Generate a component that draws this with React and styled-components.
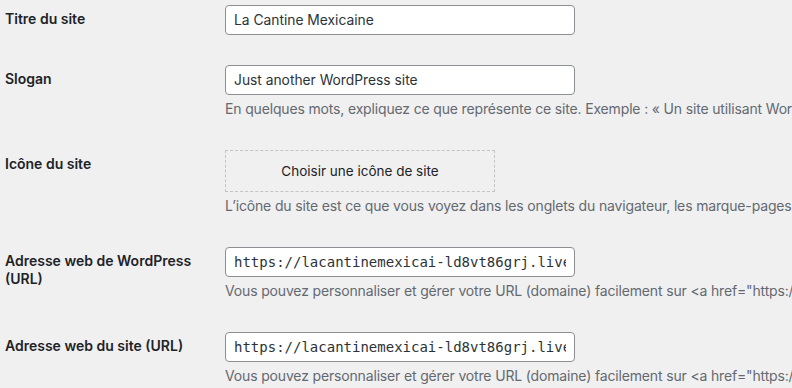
import React from "react";
import styled, { createGlobalStyle } from "styled-components";

const GlobalStyle = createGlobalStyle`
  html, body {
    margin: 0;
    padding: 0;
    background: #f0f0f1;
    overflow: hidden;
  }
  body {
    font-family: Inter, "Liberation Sans", sans-serif;
    color: #1d2327;
  }
`;

const Page = styled.div`
  margin-top: -10px;
  padding-left: 5px;
  width: 1400px;
`;

const Row = styled.div`
  display: grid;
  grid-template-columns: 210px 1fr;
`;

const Label = styled.label`
  padding: 20px 10px 20px 0;
  font-size: 14px;
  font-weight: 600;
  line-height: 1.3;
  color: #1d2327;
`;

const Field = styled.div`
  padding: 15px 10px;
`;

const TextInput = styled.input`
  box-sizing: border-box;
  display: block;
  width: 350px;
  height: 30px;
  margin: 0;
  padding: 0 8px;
  border: 1px solid #8c8f94;
  border-radius: 4px;
  background: #fff;
  color: #2c3338;
  font-family: ${(p) =>
    p.$code ? '"DejaVu Sans Mono", monospace' : 'Inter, "Liberation Sans", sans-serif'};
  font-size: ${(p) => (p.$code ? "14px" : "13.8px")};
  outline: none;
`;

const Description = styled.p`
  margin: 4px 0 1px;
  font-size: 14px;
  letter-spacing: -0.16px;
  line-height: 20px;
  color: #646970;
  white-space: nowrap;
`;

const IconButton = styled.button`
  box-sizing: border-box;
  display: block;
  width: 270px;
  height: 42px;
  margin: 0;
  border: 1px dashed #c3c4c7;
  background: transparent;
  color: #1d2327;
  font-family: Inter, "Liberation Sans", sans-serif;
  font-size: 13.5px;
  cursor: pointer;
`;

const siteUrl = "https://lacantinemexicai-ld8vt86grj.live-website.com";
const urlHelp =
  'Vous pouvez personnaliser et gérer votre URL (domaine) facilement sur <a href="https://wordpress.com/domains">WordPress.com</a>.';

export default function App() {
  return (
    <>
      <GlobalStyle />
      <Page>
        <Row>
          <Label>Titre du site</Label>
          <Field>
            <TextInput readOnly value="La Cantine Mexicaine" />
          </Field>
        </Row>
        <Row>
          <Label>Slogan</Label>
          <Field>
            <TextInput readOnly value="Just another WordPress site" />
            <Description>
              En quelques mots, expliquez ce que représente ce site. Exemple : « Un site utilisant WordPress ».
            </Description>
          </Field>
        </Row>
        <Row>
          <Label>Icône du site</Label>
          <Field>
            <IconButton type="button">Choisir une icône de site</IconButton>
            <Description>
              L’icône du site est ce que vous voyez dans les onglets du navigateur, les marque-pages et dans les applications mobiles.
            </Description>
          </Field>
        </Row>
        <Row>
          <Label>Adresse web de WordPress (URL)</Label>
          <Field>
            <TextInput $code readOnly value={siteUrl} />
            <Description>{urlHelp}</Description>
          </Field>
        </Row>
        <Row>
          <Label>Adresse web du site (URL)</Label>
          <Field>
            <TextInput $code readOnly value={siteUrl} />
            <Description>{urlHelp}</Description>
          </Field>
        </Row>
      </Page>
    </>
  );
}
